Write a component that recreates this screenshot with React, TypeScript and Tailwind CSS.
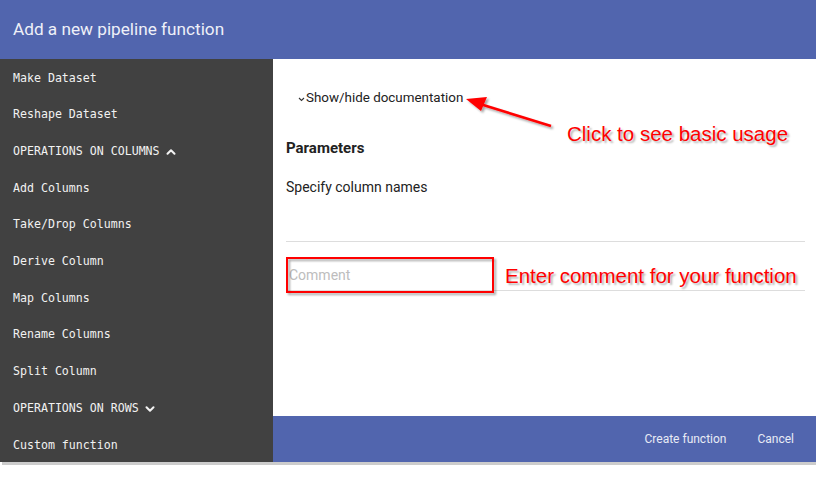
import { ChevronUp, ChevronDown } from 'lucide-react';

const mono = { fontFamily: '"DejaVu Sans Mono", monospace' };

type Item = { label: string; group?: 'up' | 'down' };

const items: Item[] = [
  { label: 'Make Dataset' },
  { label: 'Reshape Dataset' },
  { label: 'OPERATIONS ON COLUMNS', group: 'up' },
  { label: 'Add Columns' },
  { label: 'Take/Drop Columns' },
  { label: 'Derive Column' },
  { label: 'Map Columns' },
  { label: 'Rename Columns' },
  { label: 'Split Column' },
  { label: 'OPERATIONS ON ROWS', group: 'down' },
  { label: 'Custom function' },
];

export default function App() {
  return (
    <div
      className="relative w-[816px] h-[480px] bg-white overflow-hidden"
      style={{ fontFamily: 'Roboto, "Noto Sans", sans-serif' }}
    >
      <header className="h-[59px] bg-[#5165ae] flex items-center px-[13px]">
        <h1 className="text-[17.2px] text-[#eef0f8]">Add a new pipeline function</h1>
      </header>

      <div className="flex h-[403px]">
        <nav className="w-[273px] bg-[#414141] pt-[1px]" style={mono}>
          {items.map((it) => (
            <div
              key={it.label}
              className="h-[36.7px] flex items-center px-[13px] text-[11.6px] text-[#f2f2f2] whitespace-pre"
            >
              {it.label}
              {it.group === 'up' && <ChevronUp className="w-[14px] h-[14px] ml-[4px]" strokeWidth={3.5} />}
              {it.group === 'down' && <ChevronDown className="w-[14px] h-[14px] ml-[4px]" strokeWidth={3.5} />}
            </div>
          ))}
        </nav>

        <main className="flex-1 flex flex-col">
          <div className="flex-1 pl-[13px] pr-[11px]">
            <button type="button" className="mt-[29px] ml-[12px] flex items-center text-[13.4px] text-[#222]">
              <svg width="7" height="5" viewBox="0 0 7 5" className="mr-[1px] mt-[2px]">
                <path d="M1 1 L3.5 3.5 L6 1" fill="none" stroke="#333" strokeWidth="1.1" />
              </svg>
              Show/hide documentation
            </button>
            <h2 className="mt-[29px] text-[15px] font-bold text-[#222]">Parameters</h2>
            <p className="mt-[17px] text-[14px] text-[#222]">Specify column names</p>
            <div className="mt-[43px] border-t border-[#dddddd]" />
            <div className="mt-[20px] border-b border-[#dddddd] h-[29px] flex items-center">
              <input
                placeholder="Comment"
                className="text-[14px] outline-none placeholder:text-[#bdbdbd] w-[200px] pl-[3px]"
              />
            </div>
          </div>
          <footer className="h-[46px] bg-[#5165ae] flex items-center justify-end gap-[31px] pr-[22px] text-[12px] text-[#e8ebf5]">
            <span>Create function</span>
            <span>Cancel</span>
          </footer>
        </main>
      </div>
      <div className="h-[3px] ml-[2px] bg-[#cccccc]" />

      {/* annotations */}
      <svg className="absolute left-0 top-0 pointer-events-none" width="816" height="480">
        <defs>
          <filter id="sh" x="-10%" y="-10%" width="130%" height="150%">
            <feDropShadow dx="2" dy="2" stdDeviation="1" floodColor="#000" floodOpacity="0.35" />
          </filter>
        </defs>
        <g filter="url(#sh)">
          <line x1="551" y1="126" x2="480" y2="104" stroke="#ff0000" strokeWidth="2.5" />
          <polygon points="466,99 487,97 481,111" fill="#ff0000" />
          <rect x="287" y="258" width="206" height="34" fill="none" stroke="#ff0000" strokeWidth="2" />
        </g>
      </svg>
      <div
        className="absolute left-[567px] top-[119px] text-[20.5px] text-[#ff0000] pointer-events-none"
        style={{ fontFamily: '"Liberation Sans", Arial, sans-serif', textShadow: '2px 2px 2px rgba(0,0,0,0.3)' }}
      >
        Click to see basic usage
      </div>
      <div
        className="absolute left-[505px] top-[261px] text-[20.5px] text-[#ff0000] pointer-events-none"
        style={{ fontFamily: '"Liberation Sans", Arial, sans-serif', textShadow: '2px 2px 2px rgba(0,0,0,0.3)' }}
      >
        Enter comment for your function
      </div>
    </div>
  );
}
